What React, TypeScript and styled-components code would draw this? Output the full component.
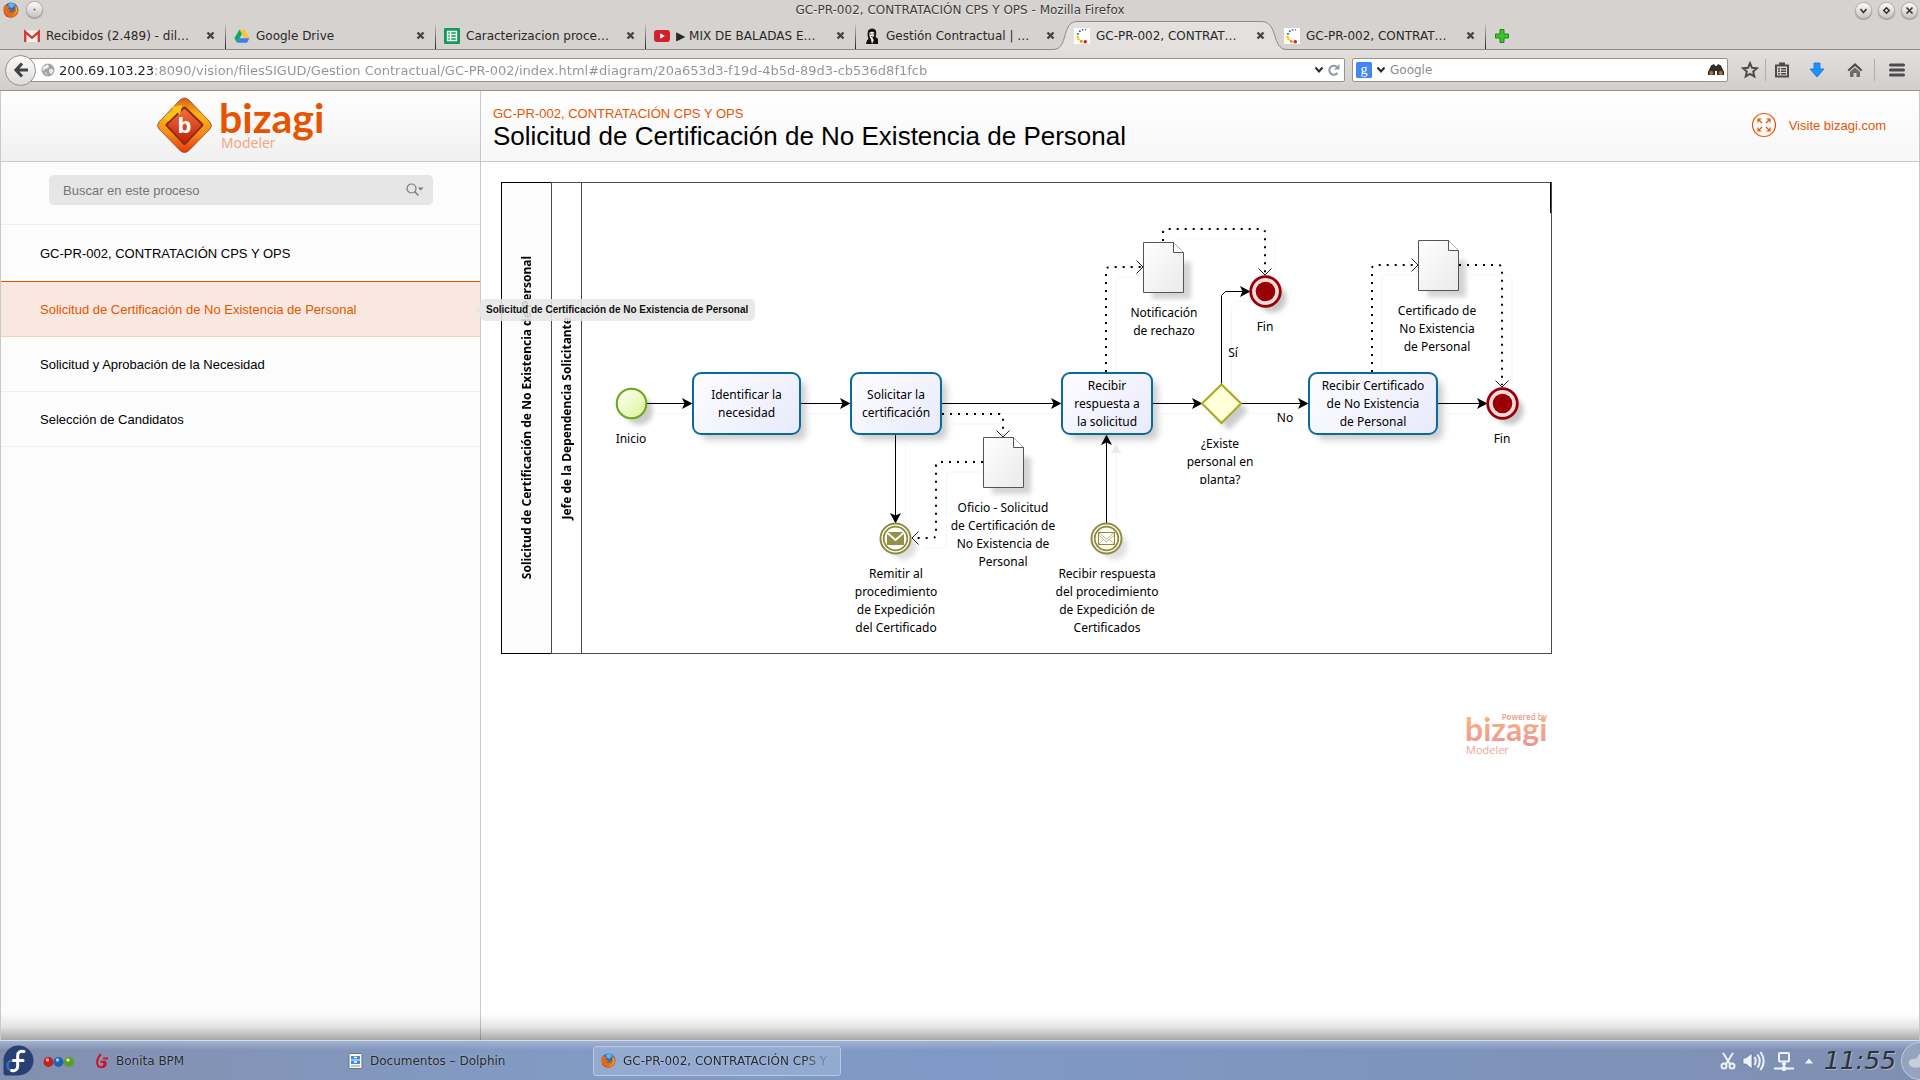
import React from 'react';
import styled, { createGlobalStyle, css } from 'styled-components';

const ui = '"DejaVu Sans", Verdana, sans-serif';
const web = '"Liberation Sans", Arial, sans-serif';
const chart = '"Noto Sans", "Segoe UI", sans-serif';
const orange = '#e65400';

const GlobalStyle = createGlobalStyle`
  *, *::before, *::after { box-sizing: border-box; }
  body { margin: 0; background: #fff; color: #000; font-family: ${web}; }
  button, input { font: inherit; color: inherit; }
  button { padding: 0; border: 0; background: none; cursor: pointer; }
  a { color: inherit; text-decoration: none; }
  svg { display: block; flex: none; }
`;

/* ---------- window ---------- */

const Desktop = styled.div`
  display: flex;
  flex-direction: column;
  height: 100vh;
  overflow: hidden;
`;

const TitleBar = styled.header`
  display: grid;
  grid-template-columns: 1fr auto 1fr;
  align-items: center;
  height: 20px;
  padding: 0 3px;
  background: #d6d2d0;
  font: 12px/18px ${ui};
  color: #3c3a3a;
  text-shadow: 0 1px 0 #f4f2f1;
`;

const TitleSide = styled.div<{ $end?: boolean }>`
  display: flex;
  gap: 8px;
  justify-content: ${p => (p.$end ? 'flex-end' : 'flex-start')};
`;

const RoundButton = styled.button`
  display: grid;
  place-items: center;
  width: 15px;
  height: 15px;
  border-radius: 50%;
  background: linear-gradient(#fbfbfb, #c9c6c4);
  box-shadow: 0 0 0 1px #b5b2b0, 0 1px 1px 1px #9b9896;
`;

const TabStrip = styled.nav`
  display: flex;
  align-items: center;
  height: 30px;
  padding-left: 15px;
  background: #d6d2d0;
  border-bottom: 1px solid #8e8b88;
`;

const Tab = styled.div<{ $rule?: boolean }>`
  position: relative;
  display: flex;
  align-items: center;
  gap: 6px;
  width: 210px;
  height: 29px;
  padding: 2px 10px 0 9px;
  font: 12px/18px ${ui};
  color: #2a2827;
  ${p => p.$rule && css`
    &::after {
      content: '';
      position: absolute;
      right: -1px;
      top: 2px;
      bottom: 0;
      width: 1px;
      background: linear-gradient(transparent, #222);
    }
  `}
`;

const ActiveShape = styled.svg`
  position: absolute;
  left: -12px;
  top: 1px;
`;

const TabLabel = styled.button`
  position: relative;
  flex: 1;
  min-width: 0;
  text-align: left;
  white-space: nowrap;
  overflow: hidden;
`;

const TabIcon = styled.span`
  position: relative;
  flex: none;
  width: 16px;
  height: 16px;
`;

const CloseButton = styled.button`
  position: relative;
  flex: none;
`;

const NewTab = styled.button`
  padding: 2px 0 0 9px;
`;

const Toolbar = styled.div`
  display: flex;
  align-items: center;
  height: 41px;
  padding: 0 1px 0 5px;
  background: linear-gradient(#e3dfde, #d2cecb);
  border-bottom: 1px solid #96928d;
`;

const BackButton = styled.button`
  display: grid;
  place-items: center;
  position: relative;
  z-index: 1;
  width: 31px;
  height: 31px;
  margin-right: -16px;
  border: 1px solid #96928d;
  border-radius: 50%;
  background: linear-gradient(#fdfdfd, #dedbd9);
`;

const Field = styled.div<{ $url?: boolean }>`
  display: flex;
  align-items: center;
  gap: 4px;
  height: 24px;
  padding: ${p => (p.$url ? '0 4px 0 20px' : '0 3px')};
  margin-right: 7px;
  flex: ${p => (p.$url ? '1' : 'none')};
  width: ${p => (p.$url ? 'auto' : '376px')};
  border: 1px solid #96928d;
  border-radius: 2px;
  background: #fff;
`;

const FieldInput = styled.input<{ $url?: boolean }>`
  flex: 1;
  min-width: 0;
  height: 20px;
  padding: 0;
  border: 0;
  outline: 0;
  background: none;
  font: ${p => (p.$url ? '13px' : '12px')} ${ui};
  color: #8d8d8d;
  ${p => p.$url && css`
    background: linear-gradient(to right, #222 95px, #929292 95px);
    background-clip: text;
    -webkit-background-clip: text;
    -webkit-text-fill-color: transparent;
  `}
  &::placeholder { color: #8d8d8d; opacity: 1; }
`;

const ToolIcons = styled.div`
  display: flex;
  align-items: center;
`;

const ToolButton = styled.button<{ $w: number }>`
  display: grid;
  place-items: center;
  width: ${p => p.$w}px;
  height: 24px;
`;

const ToolRule = styled.span`
  width: 1px;
  height: 22px;
  background: #a9b0b8;
`;

/* ---------- page ---------- */

const Page = styled.div`
  position: relative;
  flex: 1;
  display: grid;
  grid-template-columns: 480px 1fr;
  grid-template-rows: 71px 1fr;
  min-height: 0;
  border-left: 1px solid #c9c9c9;
  border-right: 1px solid #c9c9c9;
  &::after {
    content: '';
    position: absolute;
    inset: auto 0 0 0;
    height: 26px;
    background: linear-gradient(rgba(0,0,0,0), rgba(0,0,0,.1) 50%, rgba(0,0,0,.34));
    pointer-events: none;
  }
`;

const Brand = styled.div`
  display: flex;
  justify-content: center;
  border-right: 1px solid #c9c9c9;
  border-bottom: 1px solid #c9c9c9;
  background: linear-gradient(#fff, #f0f0f0);
`;

const PageHead = styled.header`
  display: flex;
  align-items: center;
  justify-content: space-between;
  padding: 0 33px 2px 12px;
  border-bottom: 1px solid #c9c9c9;
  background: linear-gradient(#fff, #f7f7f7);
`;

const HeadText = styled.div`
  padding-top: 5px;
`;

const Crumb = styled.p`
  margin: 0;
  font-size: 13px;
  line-height: 16px;
  color: ${orange};
`;

const Heading = styled.h1`
  margin: 0;
  font-weight: 400;
  font-size: 26px;
  line-height: 28px;
`;

const HeadLinks = styled.div`
  display: flex;
  align-items: center;
  gap: 12px;
  font-size: 13px;
  color: ${orange};
`;

const Sidebar = styled.aside`
  border-right: 1px solid #c9c9c9;
  background: #fcfcfc;
`;

const SearchRow = styled.div`
  padding: 13px 47px 19px 48px;
  border-bottom: 1px solid #efefef;
`;

const SearchBox = styled.div`
  display: flex;
  align-items: center;
  height: 30px;
  padding: 0 9px 0 14px;
  border-radius: 5px;
  background: #e6e6e6;
  color: #757575;
`;

const SearchInput = styled.input`
  flex: 1;
  border: 0;
  padding: 0;
  outline: 0;
  background: none;
  font-size: 13px;
  &::placeholder { color: #757575; opacity: 1; }
`;

const Item = styled.a<{ $active?: boolean; $head?: boolean }>`
  display: flex;
  align-items: center;
  position: relative;
  height: ${p => (p.$active || p.$head ? '56px' : '55px')};
  padding-left: 39px;
  font-size: 13px;
  border-bottom: ${p => (p.$head ? '0' : '1px solid #efefef')};
  ${p => p.$active && css`
    color: ${orange};
    background: #f9e8e0;
    border-top: 1px solid ${orange};
    border-bottom-color: #f8cdb8;
  `}
`;

const Tip = styled.span`
  position: absolute;
  left: 100%;
  top: 17px;
  z-index: 3;
  padding: 0 7px 0 6px;
  border-radius: 5px;
  background: rgba(230, 230, 230, .88);
  font: bold 10px/22px ${web};
  color: #111;
  white-space: nowrap;
  &::before {
    content: '';
    position: absolute;
    right: 100%;
    top: 6px;
    border: 5px solid transparent;
    border-left-width: 0;
    border-right-color: rgba(230, 230, 230, .88);
  }
`;

const Main = styled.main`
  padding: 20px;
  min-width: 0;
  overflow: hidden;
`;

/* ---------- diagram ---------- */

const Sheet = styled.div`
  width: 1051px;
`;

const Pool = styled.section`
  position: relative;
  display: flex;
  height: 472px;
  border: 1px solid #4b4b4b;
  border-left-color: #000;
`;

const Strip = styled.div<{ $w: number; $tint?: boolean }>`
  display: grid;
  place-items: center;
  width: ${p => p.$w}px;
  border-right: 1px solid #4b4b4b;
  background: ${p => (p.$tint ? '#fcfcfc' : '#fff')};
`;

const StripText = styled.span`
  writing-mode: vertical-rl;
  transform: rotate(180deg);
  font: bold 12px/16px ${chart};
  white-space: nowrap;
`;

const Connectors = styled.svg`
  position: absolute;
  left: -1px;
  top: -1px;
`;

interface Place { $x: number; $y: number; $w: number; $h?: number }

const place = css<Place>`
  position: absolute;
  left: ${p => p.$x - 502}px;
  top: ${p => p.$y - 183}px;
  width: ${p => p.$w}px;
  ${p => p.$h && css`height: ${p.$h}px;`}
`;

const Task = styled.div<Place>`
  ${place}
  display: grid;
  place-items: center;
  border: 2px solid #0b6a9c;
  border-radius: 9px;
  background: linear-gradient(135deg, #fdfdff, #e8eafc);
  box-shadow: 7px 7px 7px -2px rgba(0, 0, 0, .2);
  font: 12px/18px ${chart};
  text-align: center;
  white-space: pre-line;
`;

const Label = styled.div<Place>`
  ${place}
  font: 12px/18px ${chart};
  text-align: center;
  white-space: pre-line;
  overflow: hidden;
`;

const Powered = styled.div`
  display: flex;
  justify-content: flex-end;
  padding: 51px 3px 0 0;
`;

/* ---------- taskbar ---------- */

const Taskbar = styled.footer`
  display: flex;
  align-items: center;
  height: 40px;
  padding-left: 3px;
  border-top: 1px solid #d5dded;
  background: linear-gradient(#a3b3d2, rgba(163,179,210,0) 9px), linear-gradient(to right, #838fae, #829bc5 30%, #7f99c6 50%, #7f8fb2);
  font: 12px/18px ${ui};
  color: #26282e;
`;

const Launchers = styled.div`
  display: flex;
  align-items: center;
  gap: 9px;
  width: 84px;
`;

const Tasks = styled.div`
  display: flex;
  flex: 1;
  gap: 5px;
`;

const TaskButton = styled.button<{ $active?: boolean }>`
  display: flex;
  align-items: center;
  gap: 7px;
  width: 248px;
  height: 30px;
  padding: 0 7px;
  overflow: hidden;
  border: 1px solid ${p => (p.$active ? '#b9c8e2' : 'transparent')};
  border-radius: 3px;
  background: ${p => (p.$active ? 'rgba(170,190,222,.45)' : 'none')};
  text-shadow: 0 0 2px rgba(255, 255, 255, .4);
`;

const TaskText = styled.span<{ $fade?: boolean }>`
  flex: 1;
  min-width: 0;
  overflow: hidden;
  text-align: left;
  white-space: nowrap;
  ${p => p.$fade && css`
    mask-image: linear-gradient(to right, #000 85%, transparent);
  `}
`;

const Tray = styled.div`
  display: flex;
  align-items: center;
  gap: 5px;
`;

const Clock = styled.time`
  width: 72px;
  font: italic 25px/32px ${ui};
  color: #30323a;
  text-shadow: 1px 1px 0 #a9b5cc;
`;

/* ---------- icons ---------- */

const Firefox = ({ s = 16 }: { s?: number }) => (
  <svg width={s} height={s} viewBox="0 0 16 16">
    <circle cx="8" cy="8" r="7.4" fill="#2a6db8" />
    <path d="M5 2.2C8 .2 11 1 12 3L9 6 6.500 5z" fill="#5fb8e8" />
    <path d="M1 3.500C2 4 3 3 4 3.600c.6.800 1.500 1 2.500 1.200-.5 1-1.500 1.300-1.200 2.200.8.900 2.700.2 3.200.8-.6 1-2 1.200-2.700 1.200C7 11 10.500 10.500 11.500 8c.8-2-.2-4-1-5.200 3 1 5 3.500 4.800 6C15 13 12 15.600 8 15.600S.5 12.500.5 8.500C.4 6.500.6 4.800 1 3.500z" fill="#e66a14" />
    <path d="M12.500 3.500c1.800 2 2 4.500 1 6.800-1 2.400-3.200 3.700-5.500 3.700 3-.8 5-3 5.200-5.600.1-1.800 0-3.400-.7-4.900z" fill="#f9c22e" />
    <path d="M1 9c.5 3.500 3.500 6 7 6.400C4 15.800.8 13 1 9z" fill="#b8301c" />
  </svg>
);

const Mail = () => (
  <svg width="16" height="16" viewBox="0 0 16 16">
    <rect x="0" y="2.500" width="16" height="11.500" rx="1" fill="#f3f0ee" />
    <path d="M1.200 14V3.800L8 9.800l6.800-6V14" fill="none" stroke="#d8342c" strokeWidth="2.300" />
  </svg>
);
const Drive = () => (
  <svg width="16" height="16" viewBox="0 0 16 16">
    <path d="M5.500 1.500h5l5 8.700h-5z" fill="#fbc926" />
    <path d="M5.500 1.500L8 6 3 14.700.4 10.200z" fill="#11a861" />
    <path d="M5.500 10.200h10L13 14.700H3z" fill="#3f7df0" />
  </svg>
);
const Sheets = () => (
  <svg width="16" height="16" viewBox="0 0 16 16">
    <rect width="16" height="16" rx="1" fill="#0f9d58" />
    <path d="M3.500 3.500h9v9h-9zM3.500 6.500h9M3.500 9.500h9M6.500 3.500v9" fill="none" stroke="#fff" strokeWidth="1.300" />
  </svg>
);
const Tube = () => (
  <svg width="16" height="16" viewBox="0 0 16 16">
    <rect y="2" width="16" height="12" rx="3" fill="#d4202a" />
    <path d="M6.200 5.300v5.400L10.800 8z" fill="#fff" />
  </svg>
);
const Portrait = () => (
  <svg width="16" height="16" viewBox="0 0 16 16">
    <path d="M4 3c1-3.500 7.500-3.500 8 0 .5 2 .2 4-.4 6 .8 1 2.200 1 2.400 2.500V16H2c.5-2 .5-4 2.500-5C3.200 8.500 3.500 5 4 3z" fill="#111" />
    <path d="M5.500 4.500C7 3.500 9 3.500 10.200 4.500c.2 2 0 4-1.800 5.500l1.400 2L8 16l-1.200-5C5.500 9 5.200 7 5.500 4.500z" fill="#f1efee" />
    <path d="M6 6h1.300M8.600 6h1.300M7.200 8.600h1.500" stroke="#111" strokeWidth=".9" />
  </svg>
);
const Dots = () => (
  <svg width="16" height="16" viewBox="0 0 16 16">
    <rect width="16" height="16" fill="#fff" />
    <circle cx="11.500" cy="1.700" r=".7" fill="#8a3a8a" /><circle cx="8.600" cy="1.900" r=".9" fill="#4a5bb0" />
    <circle cx="5.800" cy="3.200" r="1" fill="#2c5fae" /><circle cx="4" cy="6" r="1.100" fill="#2a8a66" />
    <circle cx="3.600" cy="9" r="1.300" fill="#f2c200" /><circle cx="4.600" cy="11.300" r="1.300" fill="#f5d400" />
    <circle cx="7.200" cy="13.200" r="1.500" fill="#e8891a" /><circle cx="11.300" cy="13.800" r="1.800" fill="#d81e1e" />
  </svg>
);
const Cross = () => (
  <svg width="9" height="9" viewBox="0 0 9 9"><path d="M1.500 1.500l6 6M7.500 1.500l-6 6" stroke="#454545" strokeWidth="2.400" /></svg>
);
const Chevron = () => (
  <svg width="10" height="8" viewBox="0 0 10 8"><path d="M1.500 1.500L5 5.500l3.500-4" fill="none" stroke="#2b2b2b" strokeWidth="2" /></svg>
);
const Envelope = ({ x, y, solid }: { x: number; y: number; solid?: boolean }) => (
  <g transform={`translate(${x} ${y})`}>
    <circle cx="8" cy="8" r="13" opacity=".12" filter="url(#soft)" />
    <circle r="15" fill="#fff" stroke="#8f8a3e" strokeWidth="2" />
    <circle r="11.800" fill={solid ? '#fff' : '#fcfbee'} stroke="#8f8a3e" strokeWidth="1.800" />
    {solid ? (
      <>
        <rect x="-8.500" y="-6.500" width="17" height="13" fill="#949147" />
        <path d="M-8.500-6L0 1.500 8.500-6" fill="none" stroke="#fff" strokeWidth="1.800" />
      </>
    ) : (
      <>
        <rect x="-8" y="-6" width="16" height="12" fill="#fff" stroke="#8f8a3e" />
        <path d="M-8-6L0 .5 8-6M-7.500-3L0 3.500 7.500-3M-8 6l4.500-4.500M8 6L3.500 1.500" fill="none" stroke="#aaa566" strokeWidth=".8" />
      </>
    )}
  </g>
);
const EndEvent = ({ x, y }: { x: number; y: number }) => (
  <g transform={`translate(${x} ${y})`}>
    <circle cx="7" cy="7" r="14" fill="#000" opacity=".22" filter="url(#soft)" />
    <circle r="14.800" fill="#f5dcdc" stroke="#980005" strokeWidth="2.800" />
    <circle r="9.800" fill="#980005" />
  </g>
);
const Doc = ({ x, y }: { x: number; y: number }) => (
  <g transform={`translate(${x} ${y})`}>
    <path d="M9 20h39v37H9z" fill="#000" opacity=".17" filter="url(#soft)" />
    <path d="M.5.5h30l10 10v40H.5z" fill="url(#paper)" stroke="#555" />
    <path d="M30.500.5v10h10" fill="#fff" stroke="#555" />
  </g>
);

const flows = [
  'M647 403.500H690', 'M800 403.500H848', 'M942 403.500H1059', 'M1152 403.500H1200',
  'M1242 403.500H1306', 'M1438 403.500H1485', 'M1221.500 384V295.500L1225.500 291.500H1248',
  'M895.500 435V521', 'M1106.500 523V437',
];
const links = [
  'M1106 372V271Q1106 267 1110 267H1141', 'M1163 241V233Q1163 229 1167 229H1261Q1265 229 1265 233V273',
  'M1372 372V269Q1372 265 1376 265H1416', 'M1459 265H1498Q1502 265 1502 269V385',
  'M942 414H999Q1003 414 1003 418V435', 'M983 462H940Q936 462 936 466V534Q936 538 932 538H914',
];

const Drawing = () => (
  <Connectors width="1051" height="472" viewBox="501 182 1051 472" aria-hidden="true">
    <defs>
      <marker id="solid" markerUnits="userSpaceOnUse" markerWidth="12" markerHeight="12" refX="8" refY="6" orient="auto">
        <path d="M0 .5L10.500 6 0 11.500 2.500 6z" />
      </marker>
      <marker id="open" markerUnits="userSpaceOnUse" markerWidth="10" markerHeight="14" refX="5" refY="7" orient="auto">
        <path d="M.5.500L7 7 .5 13.500" fill="none" stroke="#222" />
      </marker>
      <filter id="soft" x="-30%" y="-30%" width="160%" height="160%"><feGaussianBlur stdDeviation="2.500" /></filter>
      <linearGradient id="paper" x2="1" y2="1"><stop stopColor="#fff" /><stop offset="1" stopColor="#eaeaea" /></linearGradient>
      <linearGradient id="lime" x2="1" y2="1"><stop offset=".2" stopColor="#f8fde8" /><stop offset="1" stopColor="#dcf58e" /></linearGradient>
    </defs>
    <path d="M501 182.500H551M501 653.500H551M1550.500 182V213" stroke="#000" />
    <g fill="none" stroke="#f5f5f5" transform="translate(10 10)">
      {[...flows, ...links].map(d => <path key={d} d={d} />)}
      <path d="M1101 443h10l-5-9z" fill="#e9e9e9" />
    </g>
    <g fill="none" stroke="#000">
      {flows.map(d => <path key={d} d={d} markerEnd="url(#solid)" />)}
    </g>
    <g fill="none" stroke="#000" strokeWidth="2" strokeDasharray="2 6">
      {links.map(d => <path key={d} d={d} markerEnd="url(#open)" />)}
    </g>
    <circle cx="639" cy="411" r="14" opacity=".2" filter="url(#soft)" />
    <circle cx="631.500" cy="403.500" r="14.800" fill="url(#lime)" stroke="#66a81c" strokeWidth="2" />
    <path d="M1229 392l19 19-19 19-19-19z" opacity=".2" filter="url(#soft)" />
    <path d="M1221.500 384.500l19.500 19-19.500 19.500-19.500-19.500z" fill="#ffffd9" stroke="#a8a81e" strokeWidth="2" />
    <EndEvent x={1265.500} y={291.500} />
    <EndEvent x={1502.500} y={403.500} />
    <Doc x={1143} y={242} />
    <Doc x={1418} y={240} />
    <Doc x={983} y={437} />
    <Envelope x={895.500} y={538.500} solid />
    <Envelope x={1106.500} y={538.500} />
  </Connectors>
);

const tasks = [
  { x: 692, w: 109, t: 'Identificar la\nnecesidad' },
  { x: 850, w: 92, t: 'Solicitar la\ncertificación' },
  { x: 1061, w: 92, t: 'Recibir\nrespuesta a\nla solicitud' },
  { x: 1308, w: 130, t: 'Recibir Certificado\nde No Existencia\nde Personal' },
];
const labels = [
  { x: 571, y: 430, t: 'Inicio' },
  { x: 1104, y: 304, t: 'Notificación\nde rechazo' },
  { x: 1205, y: 318, t: 'Fin' },
  { x: 1173, y: 344, t: 'Sí' },
  { x: 1225, y: 409, t: 'No' },
  { x: 1160, y: 435, h: 49, t: '¿Existe\npersonal en\nplanta?' },
  { x: 1377, y: 302, t: 'Certificado de\nNo Existencia\nde Personal' },
  { x: 1442, y: 430, t: 'Fin' },
  { x: 943, y: 499, t: 'Oficio - Solicitud\nde Certificación de\nNo Existencia de\nPersonal' },
  { x: 836, y: 565, t: 'Remitir al\nprocedimiento\nde Expedición\ndel Certificado' },
  { x: 1047, y: 565, t: 'Recibir respuesta\ndel procedimiento\nde Expedición de\nCertificados' },
];

const tabs = [
  { t: 'Recibidos (2.489) - dil…', icon: <Mail />, rule: true },
  { t: 'Google Drive', icon: <Drive />, rule: true },
  { t: 'Caracterizacion proce…', icon: <Sheets />, rule: true },
  { t: '▶ MIX DE BALADAS E…', icon: <Tube />, rule: true },
  { t: 'Gestión Contractual | …', icon: <Portrait /> },
  { t: 'GC-PR-002, CONTRAT…', icon: <Dots />, active: true },
  { t: 'GC-PR-002, CONTRAT…', icon: <Dots />, rule: true },
];

const process = 'Solicitud de Certificación de No Existencia de Personal';

export default function App() {
  return (
    <Desktop>
      <GlobalStyle />
      <TitleBar>
        <TitleSide>
          <Firefox />
          <RoundButton aria-label="Menu"><svg width="5" height="5"><circle cx="2.500" cy="2.500" r="1" fill="#666" /></svg></RoundButton>
        </TitleSide>
        <span>GC-PR-002, CONTRATACIÓN CPS Y OPS - Mozilla Firefox</span>
        <TitleSide $end>
          <RoundButton aria-label="Minimizar"><svg width="9" height="9"><path d="M1.500 3l3 3.500 3-3.500" fill="none" stroke="#333" strokeWidth="1.600" /></svg></RoundButton>
          <RoundButton aria-label="Maximizar"><svg width="9" height="9"><path d="M4.500 1.800l2.700 2.700-2.700 2.700-2.700-2.700z" fill="none" stroke="#333" strokeWidth="1.600" /></svg></RoundButton>
          <RoundButton aria-label="Cerrar"><svg width="9" height="9"><path d="M1.500 1.500l6 6M7.500 1.500l-6 6" stroke="#333" strokeWidth="1.600" /></svg></RoundButton>
        </TitleSide>
      </TitleBar>

      <TabStrip>
        {tabs.map((tab, i) => (
          <Tab key={i} $rule={tab.rule}>
            {tab.active && (
              <ActiveShape width="234" height="30" viewBox="0 0 234 30">
                <path d="M0 28.500C16 28.500 8 .5 24 .5H208C226 .5 218 28.500 234 28.500V30H0z" fill="#e3e0de" />
                <path d="M0 28.500C16 28.500 8 .5 24 .5H208C226 .5 218 28.500 234 28.500" fill="none" stroke="#8e8b88" />
              </ActiveShape>
            )}
            <TabIcon>{tab.icon}</TabIcon>
            <TabLabel>{tab.t}</TabLabel>
            <CloseButton aria-label="Cerrar pestaña"><Cross /></CloseButton>
          </Tab>
        ))}
        <NewTab aria-label="Nueva pestaña">
          <svg width="16" height="16" viewBox="0 0 16 16"><path d="M6 1.500h4V6h4.500v4H10v4.500H6V10H1.500V6H6z" fill="#3cc42a" stroke="#1d8a12" /></svg>
        </NewTab>
      </TabStrip>

      <Toolbar>
        <BackButton aria-label="Atrás">
          <svg width="16" height="16" viewBox="0 0 16 16"><path d="M9 1.500L3 8l6 6.500M3 8h12" fill="none" stroke="#444" strokeWidth="3.200" /></svg>
        </BackButton>
        <Field $url>
          <svg width="14" height="14" viewBox="0 0 14 14">
            <circle cx="7" cy="7" r="6.500" fill="#a3a3a3" />
            <path d="M2 4c2-1 3-2.500 5-2.500L8 4 5.500 6 4 5.500 3 8 1.500 7zM8 6.500l3-1 1.500 2.500-2 3-2-1zM4 9l2 1-.5 2.500z" fill="#ececec" />
          </svg>
          <FieldInput
            $url
            aria-label="Dirección"
            defaultValue="200.69.103.23:8090/vision/filesSIGUD/Gestion Contractual/GC-PR-002/index.html#diagram/20a653d3-f19d-4b5d-89d3-cb536d8f1fcb"
          />
          <Chevron />
          <svg width="12" height="14" viewBox="0 0 12 14"><path d="M9.500 9.800A4.500 4.500 0 1 1 9 4" fill="none" stroke="#8d99a8" strokeWidth="2" /><path d="M11.500 1v5.500H6z" fill="#8d99a8" /></svg>
        </Field>
        <Field>
          <svg width="16" height="16" viewBox="0 0 16 16">
            <rect width="16" height="16" rx="1.500" fill="#4285f4" />
            <text x="8" y="12" fontSize="14" fontFamily="Liberation Serif, serif" fill="#fff" textAnchor="middle">g</text>
          </svg>
          <Chevron />
          <FieldInput aria-label="Buscar" placeholder="Google" />
          <svg width="16" height="14" viewBox="0 0 16 14">
            <path d="M3 2.500L6 1l1.500 2h1L10 1l3 1.500L16 9v3H9V8H7v4H0V9z" fill="#303030" />
            <circle cx="3.300" cy="10" r="2" fill="#c66a26" /><circle cx="12.700" cy="10" r="2" fill="#c66a26" />
          </svg>
        </Field>
        <ToolIcons>
          <ToolButton $w={30} aria-label="Marcador">
            <svg width="18" height="18" viewBox="0 0 18 18"><path d="M9 2.200l2 4.600 4.800.5-3.600 3.300 1.100 4.900L9 13l-4.300 2.500 1.100-4.900-3.600-3.300 4.800-.5z" fill="none" stroke="#4c4c4c" strokeWidth="2" /></svg>
          </ToolButton>
          <ToolRule />
          <ToolButton $w={32} aria-label="Lista">
            <svg width="16" height="16" viewBox="0 0 16 16"><path d="M2 3.500h12v11H2z" fill="none" stroke="#4c4c4c" strokeWidth="2" /><path d="M5 .5h6V4H5zM4 6h2v1.500H4zM7 6h5v1.500H7zM4 8.500h2V10H4zM7 8.500h5V10H7zM4 11h2v1.500H4zM7 11h5v1.500H7z" fill="#4c4c4c" /></svg>
          </ToolButton>
          <ToolButton $w={38} aria-label="Descargas">
            <svg width="16" height="16" viewBox="0 0 16 16"><path d="M5 1h6v6h4l-7 8-7-8h4z" fill="#1e90ff" stroke="#1272d6" strokeWidth=".8" /></svg>
          </ToolButton>
          <ToolButton $w={38} aria-label="Inicio">
            <svg width="16" height="16" viewBox="0 0 16 16"><path d="M8 1l7.500 7-1.500 1.300L8 4 2 9.300.5 8z" fill="#4c4c4c" /><path d="M8 5.500l5 4.300V15H9.500v-4h-3v4H3V9.800z" fill="#6b6b6b" /></svg>
          </ToolButton>
          <ToolRule />
          <ToolButton $w={44} aria-label="Menú">
            <svg width="16" height="14" viewBox="0 0 16 14"><path d="M1.500 2h13M1.500 7h13M1.500 12h13" stroke="#4a4a50" strokeWidth="3" strokeLinecap="round" /></svg>
          </ToolButton>
        </ToolIcons>
      </Toolbar>

      <Page>
        <Brand>
          <svg width="170" height="69" viewBox="156 91 170 69" role="img" aria-label="bizagi Modeler">
            <defs>
              <linearGradient id="gem" x2="0" y2="1"><stop stopColor="#d95b12" /><stop offset=".3" stopColor="#fbb615" /><stop offset=".65" stopColor="#f58b18" /><stop offset="1" stopColor="#e8350f" /></linearGradient>
              <linearGradient id="core" x2="0" y2="1"><stop stopColor="#ef6a3a" /><stop offset="1" stopColor="#c3260d" /></linearGradient>
            </defs>
            <path d="M180 100q4.500-4 9 0l21 22q3 4 0 7l-21 21.500q-4.500 4-9 0l-21-21.500q-3-3 0-7z" fill="url(#gem)" stroke="#8a4a28" strokeWidth=".8" />
            <path d="M184.500 108.500l17 16.500-17 18-17-18z" fill="#8f2a10" stroke="#8f2a10" strokeWidth="4" strokeLinejoin="round" />
            <path d="M184.500 110.500l15 14.500-15 16-15-16z" fill="url(#core)" stroke="url(#core)" strokeWidth="3" strokeLinejoin="round" />
            <path d="M171 107l11-2-2 10-2.500-2.500-9 9-4-3.500 9-9z" fill="#fcc21c" />
            <text x="184.500" y="133" fontSize="22" fontFamily="Open Sans, sans-serif" fontWeight="700" fill="#fff" textAnchor="middle">b</text>
            <text x="219" y="133" fontSize="41" fontFamily="Lato, sans-serif" fontWeight="700" fill="#e65400">bizagi</text>
            <text x="221" y="148" fontSize="14" fontFamily="Open Sans, sans-serif" fill="#f4a37c">Modeler</text>
          </svg>
        </Brand>
        <PageHead>
          <HeadText>
            <Crumb>GC-PR-002, CONTRATACIÓN CPS Y OPS</Crumb>
            <Heading>{process}</Heading>
          </HeadText>
          <HeadLinks>
            <button aria-label="Pantalla completa">
              <svg width="26" height="26" viewBox="0 0 26 26" fill="none" stroke={orange}>
                <circle cx="13" cy="13" r="11.500" strokeWidth="1.200" />
                <path d="M7 10.500V7h3.500M15.500 7H19v3.500M19 15.500V19h-3.500M10.500 19H7v-3.500M7 7l4 4M19 7l-4 4M19 19l-4-4M7 19l4-4" strokeWidth="1.200" />
              </svg>
            </button>
            <a href="#visit">Visite bizagi.com</a>
          </HeadLinks>
        </PageHead>

        <Sidebar>
          <SearchRow>
            <SearchBox>
              <SearchInput aria-label="Buscar en este proceso" placeholder="Buscar en este proceso" />
              <svg width="18" height="14" viewBox="0 0 18 14"><circle cx="5.500" cy="5.500" r="4.500" fill="none" stroke="#777" strokeWidth="1.200" /><path d="M8.500 8.500l4 4" stroke="#777" strokeWidth="1.500" /><path d="M12 4.500h5.500L14.700 7.500z" fill="#777" /></svg>
            </SearchBox>
          </SearchRow>
          <nav>
            <Item href="#root-process" $head>GC-PR-002, CONTRATACIÓN CPS Y OPS</Item>
            <Item href="#certificacion" $active>
              {process}
              <Tip role="tooltip">{process}</Tip>
            </Item>
            <Item href="#necesidad">Solicitud y Aprobación de la Necesidad</Item>
            <Item href="#candidatos">Selección de Candidatos</Item>
          </nav>
        </Sidebar>

        <Main>
          <Sheet>
            <Pool>
              <Strip $w={50} $tint><StripText>{process}</StripText></Strip>
              <Strip $w={30}><StripText>Jefe de la Dependencia Solicitante</StripText></Strip>
              <Drawing />
              {tasks.map(k => <Task key={k.x} $x={k.x} $y={372} $w={k.w} $h={63}>{k.t}</Task>)}
              {labels.map(l => <Label key={`${l.x}-${l.y}`} $x={l.x} $y={l.y} $w={120} $h={l.h}>{l.t}</Label>)}
            </Pool>
            <Powered>
              <svg width="84" height="56" viewBox="1464 706 84 56" role="img" aria-label="Powered by bizagi Modeler">
                <defs><linearGradient id="blush" x2="0" y2="1"><stop offset=".3" stopColor="#f5b184" /><stop offset="1" stopColor="#ee9096" /></linearGradient></defs>
                <text x="1546" y="721" fontSize="8" fontFamily="Open Sans, sans-serif" fontWeight="600" fill="#ee9b85" textAnchor="end">Powered by</text>
                <text x="1464" y="742" fontSize="32" fontFamily="Lato, sans-serif" fontWeight="700" fill="url(#blush)">bizagi</text>
                <text x="1465" y="755" fontSize="11" fontFamily="Open Sans, sans-serif" fill="#f0a596">Modeler</text>
              </svg>
            </Powered>
          </Sheet>
        </Main>
      </Page>

      <Taskbar>
        <Launchers>
          <svg width="31" height="31" viewBox="0 0 31 31">
            <path d="M15.500.5a15 15 0 1 1 0 30H3a2.500 2.500 0 0 1-2.500-2.500V15.500a15 15 0 0 1 15-15z" fill="#294172" />
            <path d="M13 15.500H9.500a5 5 0 1 0 5 5" fill="none" stroke="#3c6eb4" strokeWidth="2.500" />
            <path d="M21 6.500c-4-1.200-6.300 1-6.300 4V21c0 3.500-2.500 5.300-6 4.500M10.500 15.500H20" fill="none" stroke="#fff" strokeWidth="3" strokeLinecap="round" />
          </svg>
          <svg width="32" height="14" viewBox="0 0 32 14">
            <circle cx="5.500" cy="8" r="5" fill="#c2221e" /><circle cx="15.500" cy="8" r="5" fill="#2462b0" /><circle cx="26" cy="8" r="5" fill="#5c9e1e" />
            <circle cx="4.500" cy="6" r="1.700" fill="#f3a6a0" /><circle cx="14.500" cy="6" r="1.700" fill="#a8cbf2" /><circle cx="25" cy="6" r="1.700" fill="#cfeaa0" />
          </svg>
        </Launchers>
        <Tasks>
          <TaskButton>
            <svg width="14" height="16" viewBox="0 0 14 16"><path d="M6 1C3 4 1.500 8 2.500 11.500c1 3.500 6 3.500 6.800.3.600-2.400-1.800-4-3.800-2.500" fill="none" stroke="#d2132e" strokeWidth="2" /><path d="M8 5.500h5M8.500 8.500c3-.5 3.500 4-.5 6" fill="none" stroke="#d2132e" strokeWidth="1.800" /></svg>
            <TaskText>Bonita BPM</TaskText>
          </TaskButton>
          <TaskButton>
            <svg width="15" height="16" viewBox="0 0 15 16"><rect x="1" y=".5" width="13" height="15" rx="1" fill="#f5f7fa" stroke="#6c747f" /><path d="M3 3h9v3.500H3zM3 7.500h9V11H3z" fill="#3f8be0" /><path d="M6 4.500h3M6 9h3" stroke="#fff" strokeWidth="1.500" /><path d="M3 13h9" stroke="#8894a4" /></svg>
            <TaskText>Documentos – Dolphin</TaskText>
          </TaskButton>
          <TaskButton $active>
            <Firefox s={15} />
            <TaskText $fade>GC-PR-002, CONTRATACIÓN CPS Y OPS</TaskText>
          </TaskButton>
        </Tasks>
        <Tray>
          <svg width="16" height="20" viewBox="0 0 16 20" fill="none" stroke="#eef2f8" strokeWidth="2"><path d="M3 2l7 11M13 2L6 13" /><circle cx="4" cy="15" r="2.500" /><circle cx="12" cy="15" r="2.500" /></svg>
          <svg width="28" height="24" viewBox="0 0 28 24"><path d="M2 9h3l6-5v16l-6-5H2z" fill="#eef2f8" stroke="#56627c" strokeWidth=".6" /><path d="M13.500 8q2.500 4 0 8M16.500 5.500q4.500 6.500 0 13M19.500 3q6.500 9 0 18" fill="none" stroke="#eef2f8" strokeWidth="2" /></svg>
          <svg width="20" height="20" viewBox="0 0 20 20" fill="none" stroke="#eef2f8" strokeWidth="2"><rect x="5" y="2" width="10" height="8.500" rx="1" /><path d="M8 13h4M10 11v6M0 17.500h20" /><circle cx="10" cy="17.500" r="1.500" fill="#eef2f8" /></svg>
          <svg width="20" height="8" viewBox="0 0 20 8"><path d="M10 1.500l4 5H6z" fill="#eef2f8" /></svg>
          <Clock>11:55</Clock>
          <svg width="19" height="38" viewBox="0 0 19 38"><circle cx="19" cy="19" r="18.500" fill="#96a3bf" stroke="#c3ccdd" /><path d="M19 12c-3 1-2 5-6 5s-6 2-5 5 5 5 11 3" fill="#c6cedc" /></svg>
        </Tray>
      </Taskbar>
    </Desktop>
  );
}
